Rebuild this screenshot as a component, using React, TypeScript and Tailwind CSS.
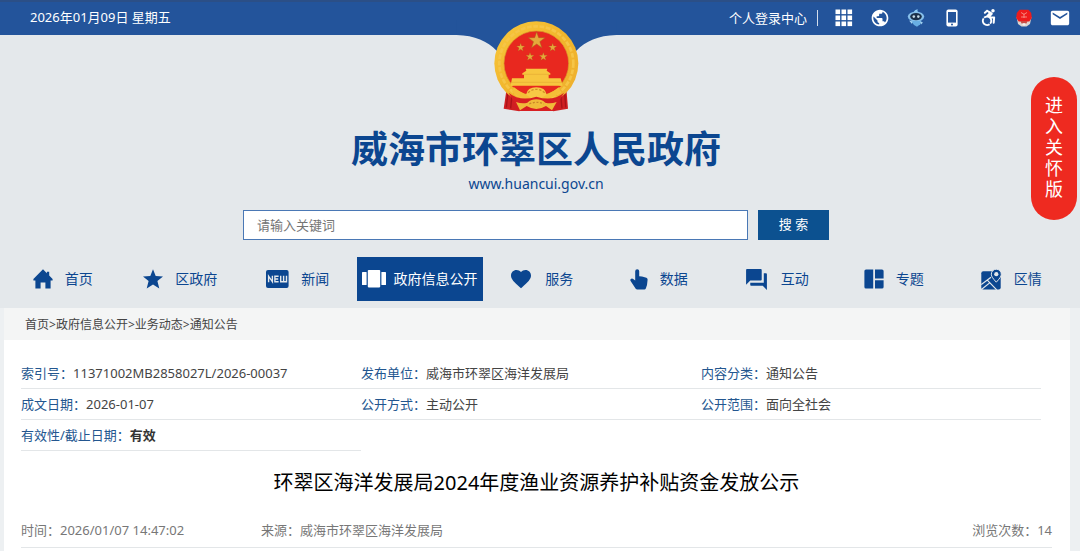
import React from 'react'
import { FaAccessibleIcon } from 'react-icons/fa'
import { MdEmail, MdFavorite, MdForum, MdPublic } from 'react-icons/md'

interface NavItem {
  label: string
  icon: React.ReactNode
  active?: boolean
}

interface InfoItem {
  label: string
  value: string
  bold?: boolean
}

const GridIcon = () => (
  <svg className="w-[18px] h-[18px]" viewBox="0 0 18 18" fill="currentColor">
    {[0, 6, 12].map(y =>
      [0, 6, 12].map(x => (
        <rect key={x + '-' + y} x={x + 0.5} y={y + 0.5} width="4.6" height="4.6" />
      ))
    )}
  </svg>
)

const RobotIcon = () => (
  <svg className="w-[18px] h-[18px]" viewBox="0 0 18 18">
    <path d="M7 4C6.5 1.5 9 .2 11 .4 9.8 1.5 10.5 2.5 12 4z" fill="#8ecdf3" />
    <ellipse cx="9" cy="7.6" rx="8.2" ry="5.2" fill="#86bfea" />
    <ellipse cx="9" cy="7.6" rx="5.8" ry="3.6" fill="#1c3048" />
    <circle cx="6.8" cy="7.6" r="1.3" fill="#c5dbe6" />
    <circle cx="11.3" cy="7.6" r="1.3" fill="#c5dbe6" />
    <path d="M4 12h10.5l-1.3 3.3-3.2 2.500-3-1.800z" fill="#68aee3" />
    <path d="M2 11.5l3.5 1-.5 2.5zM13 12.5l3 1-2 2z" fill="#a6d5f2" />
  </svg>
)

const PhoneIcon = () => (
  <svg className="w-3 h-[18px]" viewBox="0 0 12 18">
    <rect x=".4" y=".6" width="11.2" height="16.8" rx="2" fill="#fff" />
    <rect x="2" y="3" width="8" height="10.6" fill="#23549b" />
    <circle cx="6" cy="15.5" r="1" fill="#23549b" />
  </svg>
)

const MascotIcon = () => (
  <svg className="w-[18px] h-[18px]" viewBox="0 0 18 18">
    <path d="M1.5 8l1.5 7 3.5 2.5h5l3.5-2.500L16.500 8z" fill="#ddd3cf" />
    <path d="M4.5.8h9L16.2 4l.6 5-2.5 3.5H3.7L1.2 9l.6-5z" fill="#ee1c1c" />
    <path d="M6 3.500l3 1.800 3-1.800M6 8h6M9 5v4" stroke="#f9a093" strokeWidth=".8" fill="none" />
    <path d="M5.5 12h7l-1 2.5h-5z" fill="#c84a42" />
    <path d="M7 15l2-1 2 1-2 2z" fill="#f4efec" />
  </svg>
)

const HomeIcon = () => (
  <svg className="w-5 h-5" viewBox="0 0 20 20" fill="currentColor">
    <path d="M10 .3l3.9 3.9V2.8h2.3v3.7l3.4 3.6v1.5h-2v8h-5.2v-6.2H7.6v6.2H2.4v-8h-2v-1.5z" />
  </svg>
)

const StarIcon = () => (
  <svg className="w-5 h-5" viewBox="0 0 20 20" fill="currentColor">
    <path d="M10 .2l2.7 6.7 7.3.5-5.6 4.7 1.9 7.5-6.3-4-6.3 4 1.9-7.5L0 7.4l7.3-.5z" />
  </svg>
)

const NewIcon = () => (
  <svg className="w-[23px] h-[18px]" viewBox="0 0 23 18">
    <rect width="22.6" height="18" rx="2" fill="currentColor" />
    <path
      d="M2.6 12.2V6.2l3.8 5.6v-6M12.6 6.2H8.9v5.6h3.7M8.9 9h3.3M14.7 5.8v6h5.8v-6M17.6 5.8v6"
      stroke="#e4e8eb"
      strokeWidth="1.4"
      fill="none"
    />
  </svg>
)

const CarouselIcon = () => (
  <svg className="w-6 h-[18px]" viewBox="0 0 24 18" fill="currentColor">
    <rect y="2" width="4.6" height="13" rx=".6" />
    <rect x="5.8" y="0" width="12.4" height="17.4" rx=".8" />
    <rect x="19.4" y="2" width="4.6" height="13" rx=".6" />
  </svg>
)

const HandIcon = () => (
  <svg className="w-[18px] h-[21px]" viewBox="0 0 18 21" fill="currentColor">
    <path d="M5.2 2.2a2 2 0 0 1 4 0v5l2.8.2 4.4 1.4q1.3.5 1.2 1.9l-.6 5.3-1.2 3.4q-.4 1.1-1.4 1.1H7.2q-.9 0-1.5-.8L.6 12.1q-.8-1.7.7-2.4 1-.4 1.9.3l2 1.5z" />
  </svg>
)

const PanelsIcon = () => (
  <svg className="w-5 h-5" viewBox="0 0 20 20" fill="currentColor">
    <path d="M2 .5h7.2v19H2q-1.6 0-1.6-1.6V2.1Q.4.5 2 .5zM11 .5h7q1.6 0 1.6 1.6v7.3H11zM11 11.2h8.6v6.7q0 1.6-1.6 1.6h-7z" />
  </svg>
)

const MapIcon = () => (
  <svg className="w-[21px] h-[21px]" viewBox="0 0 21 21">
    <rect x=".3" y="2.2" width="19.4" height="18.4" rx="2" fill="currentColor" />
    <path
      d="M.3 15.6L10 8.3M6.3 11.2l9.4 9.6M1 20l8-6.4"
      stroke="#e4e8eb"
      strokeWidth="1.2"
      fill="none"
    />
    <path
      d="M15.3 13.2C12 9.5 10.3 7.6 10.3 5.2a5 5 0 0 1 10 0c0 2.4-1.7 4.3-5 8z"
      fill="currentColor"
      stroke="#e4e8eb"
      strokeWidth="1"
    />
    <circle cx="15.3" cy="5.2" r="2.1" fill="#e4e8eb" />
  </svg>
)

// the blue notch under the top bar together with the national emblem
const Emblem = () => (
  <svg className="w-[167px] h-[92px]" viewBox="39 60 501 276" aria-hidden="true">
    <defs>
      <linearGradient id="gold" x1="0" y1="0" x2="1" y2="1">
        <stop offset="0" stopColor="#f8c83c" />
        <stop offset=".5" stopColor="#f1b52c" />
        <stop offset="1" stopColor="#eeb02f" />
      </linearGradient>
      <path
        id="star"
        d="M0-25L6-8 25-8 9.5 4 15.5 22 0 11-15.5 22-9.5 4-25-8-6-8z"
      />
    </defs>
    <path d="M50 105C105 106 142 124 170 152H409C437 124 474 106 529 105V60H50z" fill="#23549b" />
    <path d="M202 252L191 326 238 334 290 300 340 334 384 326 378 252z" fill="#cf1f22" />
    <path
      d="M204 276L199 322M216 284L212 325M374 276L377 322M362 284L366 325"
      stroke="#a91319"
      strokeWidth="4"
    />
    <circle cx="289" cy="190" r="126" fill="url(#gold)" />
    <circle
      cx="289"
      cy="190"
      r="111"
      fill="none"
      stroke="#f6c547"
      strokeWidth="8"
      strokeDasharray="14 5"
    />
    <circle cx="289" cy="190" r="97" fill="#e8281f" stroke="#d99a2b" strokeWidth="2" />
    <g fill="#e5a93b" stroke="#a9611d" strokeWidth="1.5">
      <use href="#star" transform="translate(290 121)" />
      <use href="#star" transform="translate(242 142) scale(.5)" />
      <use href="#star" transform="translate(338 142) scale(.5)" />
      <use href="#star" transform="translate(270 170) scale(.5)" />
      <use href="#star" transform="translate(310 170) scale(.5)" />
    </g>
    <path
      d="M257 206H322L320 212 331 220V224H326V235H362L368 257H212L216 235H252V224H247V220L259 212z"
      fill="#f7c63f"
    />
    <path d="M251 223H327M214 247H366" stroke="#e5ab34" strokeWidth="2" />
    <path d="M215 258Q244 280 262 282L289 268 316 282Q340 276 364 258z" fill="#e8281f" />
    <path d="M222 262Q289 318 356 262L362 276Q330 304 289 296 246 304 216 276z" fill="#f4be37" />
    <path d="M258 284Q262 262 289 262 316 262 320 284L304 294H274z" fill="#f7c845" />
    <path
      d="M264 278Q289 258 314 278"
      stroke="#d08e28"
      strokeWidth="4"
      strokeDasharray="7 5"
      fill="none"
    />
    <path d="M206 278Q240 306 289 290 338 306 372 278L340 333H238z" fill="#d71f22" />
    <path
      d="M228 306Q246 312 262 308 274 298 289 298 304 298 316 308 332 312 350 306L336 331 318 318Q289 336 260 318L240 331z"
      fill="#f0bb39"
    />
    <path
      d="M268 312Q289 302 312 312"
      stroke="#c9862a"
      strokeWidth="4"
      strokeDasharray="6 5"
      fill="none"
    />
    <path d="M240 333L262 322Q289 336 316 322L338 333z" fill="#d71f22" />
  </svg>
)

const navItems: NavItem[] = [
  { label: '首页', icon: <HomeIcon /> },
  { label: '区政府', icon: <StarIcon /> },
  { label: '新闻', icon: <NewIcon /> },
  { label: '政府信息公开', icon: <CarouselIcon />, active: true },
  { label: '服务', icon: <MdFavorite size={24} /> },
  { label: '数据', icon: <HandIcon /> },
  { label: '互动', icon: <MdForum size={25} /> },
  { label: '专题', icon: <PanelsIcon /> },
  { label: '区情', icon: <MapIcon /> },
]

const tools = [
  { title: '网站导航', icon: <GridIcon /> },
  { title: '多语言', icon: <MdPublic size={20} /> },
  { title: '智能问答', icon: <RobotIcon /> },
  { title: '手机版', icon: <PhoneIcon /> },
  { title: '无障碍', icon: <FaAccessibleIcon size={17} /> },
  { title: '政务', icon: <MascotIcon /> },
  { title: '邮箱', icon: <MdEmail size={22} /> },
]

const infoItems: InfoItem[] = [
  { label: '索引号：', value: '11371002MB2858027L/2026-00037' },
  { label: '发布单位：', value: '威海市环翠区海洋发展局' },
  { label: '内容分类：', value: '通知公告' },
  { label: '成文日期：', value: '2026-01-07' },
  { label: '公开方式：', value: '主动公开' },
  { label: '公开范围：', value: '面向全社会' },
  { label: '有效性/截止日期：', value: '有效', bold: true },
]

const crumbs = ['首页', '政府信息公开', '业务动态', '通知公告']

const TopBar = () => (
  <div className="flex justify-between items-center pr-0.5 pb-0.5 pl-[30px] h-[35px] text-[13px] text-white bg-[#23549b] border-t-2 border-[#2b4f87]">
    <p>2026年01月09日 星期五</p>
    <div className="flex items-center">
      <a className="pr-2.5 leading-4 border-r border-white/80" href="#login">
        个人登录中心
      </a>
      <div className="flex ml-2">
        {tools.map(tool => (
          <a
            key={tool.title}
            className="flex justify-center items-center w-9"
            href="#tools"
            aria-label={tool.title}
          >
            {tool.icon}
          </a>
        ))}
      </div>
    </div>
  </div>
)

const Nav = () => (
  <nav className="flex mt-[17px] w-full pr-0.5 pl-1">
    {navItems.map(item => (
      <a
        key={item.label}
        href="#nav"
        className={
          item.active
            ? 'flex gap-2 justify-center items-center px-[5px] h-11 text-sm text-white bg-[#0b4690] whitespace-nowrap'
            : 'flex flex-1 gap-3 justify-center items-center h-11 text-sm text-[#0b4690] whitespace-nowrap'
        }
      >
        {item.icon}
        {item.label}
      </a>
    ))}
  </nav>
)

export default function App() {
  return (
    <div className="relative min-h-screen bg-[#edf0f2] font-['Noto_Sans','Noto_Sans_CJK_SC',sans-serif]">
      <TopBar />
      <header className="flex flex-col items-center pr-2 pb-[7px] bg-[#e4e8eb]">
        <div className="-mt-[15px]">
          <Emblem />
        </div>
        <h1 className="mt-[15px] text-[37px] font-bold leading-[44px] text-[#0b4690]">
          威海市环翠区人民政府
        </h1>
        <p className="mt-[3px] text-sm leading-5 text-[#0b4690]">www.huancui.gov.cn</p>
        <form
          className="flex gap-2.5 mt-4 w-full max-w-[586px]"
          onSubmit={e => e.preventDefault()}
        >
          <input
            className="flex-1 px-[13px] h-[30px] text-[13px] bg-white border border-[#4a78b5] outline-none placeholder:text-[#757575]"
            type="text"
            aria-label="请输入关键词"
            placeholder="请输入关键词"
          />
          <button className="w-[71px] h-[30px] text-[13px] text-white bg-[#0c5190]" type="submit">
            搜 索
          </button>
        </form>
        <Nav />
      </header>

      <main className="mr-2.5 ml-1 bg-white">
        <div className="px-[21px] h-8 text-xs leading-[34px] text-[#444] bg-[#f4f5f5]">
          {crumbs.map((crumb, i) => (
            <React.Fragment key={crumb}>
              {i > 0 && '>'}
              <a href="#crumb">{crumb}</a>
            </React.Fragment>
          ))}
        </div>
        <div className="pt-[18px] pr-[18px] pl-[17px] min-h-[211px]">
          <dl className="grid grid-cols-3 mr-[11px] text-[13px]">
            {infoItems.map(item => (
              <div
                key={item.label}
                className="flex h-[31px] leading-[30px] border-b border-[#e3e6e8]"
              >
                <dt className="text-[#23568f]">{item.label}</dt>
                <dd className={item.bold ? 'font-bold text-[#333]' : 'text-[#444]'}>
                  {item.value}
                </dd>
              </div>
            ))}
          </dl>
          <h2 className="mt-4 text-xl leading-8 text-center text-black">
            环翠区海洋发展局2024年度渔业资源养护补贴资金发放公示
          </h2>
          <div className="flex mt-[14px] h-[35px] text-[13px] leading-[34px] text-[#777] border-b border-[#e3e6e8]">
            <p className="w-60">时间：2026/01/07 14:47:02</p>
            <p className="flex-1">来源：威海市环翠区海洋发展局</p>
            <p>浏览次数：14</p>
          </div>
        </div>
      </main>

      <button className="flex absolute top-[77px] right-[3px] justify-center pt-[18px] pb-5 w-[46px] text-lg leading-[21px] text-white bg-[#ee2a20] rounded-full">
        <span className="w-[18px] break-all">进入关怀版</span>
      </button>
    </div>
  )
}
